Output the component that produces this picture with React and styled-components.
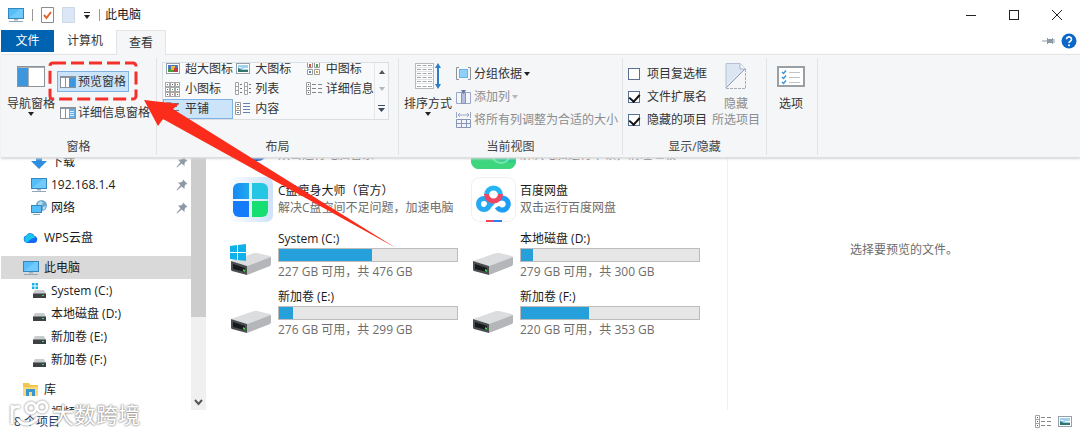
import React, { useState } from "react";
import styled, { createGlobalStyle } from "styled-components";

const GlobalStyle = createGlobalStyle`
  * {
    box-sizing: border-box;
  }
  body {
    margin: 0;
    background: #fff;
    font-family: "Open Sans", "Noto Sans CJK SC", sans-serif;
    font-size: 12px;
    line-height: 16px;
    color: #1a1a1a;
  }
  button, input {
    font: inherit;
    color: inherit;
  }
  button {
    border: 0;
    padding: 0;
    background: none;
    white-space: nowrap;
  }
  svg {
    display: block;
    flex: none;
  }
`;

const Window = styled.div`
  position: relative;
  display: flex;
  flex-direction: column;
  height: 100vh;
  overflow: hidden;
`;

const TitleBar = styled.header`
  display: flex;
  align-items: center;
  height: 30px;
  padding: 0 2px 0 8px;
`;

const QuickAccess = styled.div`
  display: flex;
  align-items: center;
  gap: 8px;
`;

const Divider = styled.span`
  width: 1px;
  height: 12px;
  background: #9a9a9a;
`;

const Title = styled.h1`
  flex: 1;
  margin: 0;
  padding-left: 5px;
  font-size: 12px;
  font-weight: 400;
`;

const WindowButton = styled.button`
  display: grid;
  place-items: center;
  width: 43px;
  height: 28px;
`;

const TabBar = styled.nav`
  position: relative;
  z-index: 2;
  display: flex;
  align-items: flex-start;
  height: 24px;
  padding-left: 1px;
`;

const Tab = styled.button`
  width: ${(props) => props.$width};
  height: ${(props) => (props.$active ? "25px" : "22px")};
  color: ${(props) => (props.$file ? "#fff" : "#333")};
  background: ${(props) => (props.$file ? "#0063b1" : props.$active ? "#f5f6f7" : "none")};
  border: ${(props) => (props.$active ? "1px solid #e2e4e6" : "0")};
  border-bottom: 0;
`;

const TabTools = styled.div`
  display: flex;
  align-items: center;
  gap: 6px;
  height: 22px;
  margin-left: auto;
  padding-right: 3px;
`;

const Ribbon = styled.section`
  position: absolute;
  z-index: 1;
  top: 54px;
  left: 1px;
  right: 0;
  display: flex;
  height: 104px;
  padding: 3px 0 2px;
  background: #f5f6f7;
  border-top: 1px solid #e2e4e6;
  border-bottom: 1px solid #dcdee0;
  box-shadow: 0 1px 2px #d5d7d9;
`;

const Group = styled.div`
  display: flex;
  flex-direction: column;
  justify-content: space-between;
  flex: none;
  width: ${(props) => props.$width};
  border-right: 1px solid #e2e3e4;
`;

const GroupBody = styled.div`
  display: flex;
  align-items: flex-start;
  gap: ${(props) => props.$gap || "0"};
  padding: ${(props) => props.$pad || "4px 5px 0"};
  color: #333;
`;

const GroupLabel = styled.div`
  text-align: center;
  color: #444;
`;

const BigButton = styled.button`
  display: flex;
  flex-direction: column;
  align-items: center;
  width: 48px;
  color: ${(props) => (props.disabled ? "#8a8d90" : "#333")};

  > svg:first-child {
    height: 28px;
    margin-bottom: 6px;
  }
`;

const Stack = styled.div`
  display: flex;
  flex-direction: column;
  align-items: flex-start;
  gap: ${(props) => props.$gap || "0"};
  padding-top: ${(props) => props.$top || "0"};
  margin-left: ${(props) => props.$left || "0"};
`;

const SmallButton = styled.button`
  display: flex;
  align-items: center;
  gap: 2px;
  height: ${(props) => props.$height || "23px"};
  padding: 0 2px;
  color: ${(props) => (props.disabled ? "#8a8d90" : "#333")};
  background: ${(props) => (props.$pressed ? "#cce4f9" : "none")};
  border: 1px solid ${(props) => (props.$pressed ? "#7fb2e3" : "transparent")};
`;

const Marked = styled.div`
  position: relative;
`;

const DashFrame = styled.svg`
  position: absolute;
  top: -10px;
  left: -10px;
  width: 92px;
  height: 40px;
  pointer-events: none;
`;

const Gallery = styled.div`
  display: flex;
  flex: 1;
  height: 58px;
  margin-right: 4px;
  border: 1px solid #dcdfe2;
  background: #f8f9fa;
`;

const GalleryGrid = styled.div`
  display: grid;
  flex: 1;
  grid-template-columns: repeat(3, minmax(0, 1fr));
  grid-auto-rows: 20px;
  align-content: end;
  overflow: hidden;
`;

const GalleryItem = styled.button`
  display: flex;
  align-items: center;
  gap: 4px;
  padding: 0 1px;
  line-height: 14px;
  background: ${(props) => (props.$selected ? "#cce4f9" : "none")};
  border: 1px solid ${(props) => (props.$selected ? "#7fb2e3" : "transparent")};
`;

const GalleryScroll = styled.div`
  display: grid;
  width: 14px;
  border-left: 1px solid #e4e6e8;

  button {
    display: grid;
    place-items: center;
  }
`;

const CheckRow = styled.label`
  display: flex;
  align-items: center;
  gap: 7px;
  height: 23px;
  white-space: nowrap;
`;

const Check = styled.input.attrs({ type: "checkbox" })`
  appearance: none;
  display: grid;
  place-items: center;
  width: 12px;
  height: 12px;
  margin: 0;
  background: #fff;
  border: 1px solid #5b6f94;

  &:checked::after {
    content: "";
    width: 5px;
    height: 8px;
    margin-bottom: 3px;
    border: solid #111;
    border-width: 0 2px 2px 0;
    transform: rotate(42deg);
  }
`;

const Body = styled.div`
  display: flex;
  flex: 1;
  min-height: 0;
`;

const Sidebar = styled.aside`
  display: flex;
  flex: none;
  width: 206px;
`;

const Tree = styled.ul`
  flex: 1;
  height: 100%;
  margin: 0;
  padding: 96px 0 0 1px;
  overflow: hidden;
  list-style: none;
`;

const TreeRow = styled.li`
  display: flex;
  align-items: center;
  gap: ${(props) => (props.$root ? "5px" : "4px")};
  height: 23px;
  margin-top: ${(props) => (props.$root ? "7px" : "0")};
  padding: 0 3px 0 ${(props) => (props.$root ? "22px" : "30px")};
  background: ${(props) => (props.$selected ? "#d9d9d9" : "none")};
  white-space: nowrap;

  > span {
    flex: 1;
  }
`;

const Scrollbar = styled.div`
  display: flex;
  flex-direction: column;
  width: 15px;
  background: #f0f0f0;
`;

const Thumb = styled.div`
  flex: 1;
  background: #cdcdcd;
`;

const ScrollEnd = styled.button`
  display: grid;
  place-items: end center;
  height: 93px;
  padding-bottom: 4px;
`;

const Files = styled.main`
  flex: 1;
  padding: 66px 0 0 23px;
  overflow: hidden;
`;

const Tiles = styled.div`
  display: grid;
  grid-template-columns: repeat(auto-fill, 242px);
  grid-template-rows: 52px 54px;
  grid-auto-rows: 58px;
`;

const Tile = styled.article`
  display: flex;
  align-items: center;
  gap: 4px;
`;

const TileText = styled.div`
  width: 180px;
  white-space: nowrap;
`;

const TileName = styled.div`
  min-height: 17px;
  line-height: 17px;
`;

const TileInfo = styled.div`
  line-height: 18px;
  color: #6d6d6d;
`;

const Meter = styled.div`
  height: 14px;
  margin: 1px 0;
  background: #e6e6e6;
  border: 1px solid #bcbcbc;
`;

const MeterFill = styled.div`
  height: 100%;
  background: #26a0da;
`;

const Preview = styled.aside`
  flex: none;
  width: 353px;
  padding-top: 188px;
  border-left: 1px solid #f0f0f0;
  text-align: center;
  color: #6d6d6d;
`;

const StatusBar = styled.footer`
  display: flex;
  align-items: center;
  gap: 6px;
  height: 23px;
  padding: 0 7px 0 14px;
  color: #1e3a63;

  > span {
    flex: 1;
  }
`;

const ArrowOverlay = styled.svg`
  position: absolute;
  z-index: 3;
  top: 90px;
  left: 140px;
  pointer-events: none;
`;

const Watermark = styled.div`
  position: absolute;
  z-index: 3;
  left: 8px;
  bottom: 4px;
  display: flex;
  align-items: center;
  gap: 2px;
  color: #fff;
  font-size: 22px;
  line-height: 28px;
  text-shadow: 0 0 2px #777, 0 0 2px #999;

  svg {
    filter: drop-shadow(0 0 1px #777);
  }
`;

const Caret = ({ color = "#222" }) => (
  <svg width="6" height="4"><path d="M0 0h6L3 4z" fill={color} /></svg>
);

const Monitor = () => (
  <svg width="16" height="16">
    <rect x="0.5" y="1.5" width="15" height="10" fill="#55bdf8" stroke="#3586bd" />
    <path d="M1 11L12 2h3v9z" fill="#82d2ff" opacity="0.6" />
    <path d="M6 12h4v1.5H6z" fill="#9fb3c2" />
    <path d="M1 14.5h14" stroke="#8fa7b8" />
  </svg>
);

const PaneIcon = ({ detail }) => (
  <svg width="16" height="12">
    <rect x="0.5" y="0.5" width="15" height="11" fill="#fff" stroke="#8c9299" />
    <path d="M5.5 1v10M1 1.5h14" stroke="#8c9299" fill="none" />
    <path d="M9 2h6v9H9z" fill={detail ? "#67aee6" : "#3e97dc"} />
    {detail && <path d="M10 4.5h4M10 6.5h4M10 8.5h4" stroke="#dceefb" />}
  </svg>
);

const PictureIcon = ({ big }) => (
  <svg width="16" height="14">
    <rect x="1.5" y="1.5" width="13" height="10" fill="#fff" stroke="#96a0aa" />
    <path d="M3 3h10v7H3z" fill={big ? "#4a78c2" : "#9fd0ee"} />
    {big ? (
      <>
        <path d="M3 7h4l2 3H3z" fill="#4b9b3c" />
        <rect x="6" y="4" width="4" height="4" fill="#f2b63a" />
        <path d="M9 6h4v4H9z" fill="#b73d46" />
      </>
    ) : (
      <>
        <path d="M3 5h3l3 2h4v-1z" fill="#fff" />
        <path d="M3 6l4 2h6v2H3z" fill="#30766c" />
      </>
    )}
  </svg>
);

const dots = ["#d05045", "#4b7fc0", "#555", "#559b52"];

const MediumIcon = () => (
  <svg width="16" height="14">
    <path d="M1.5 0.5h5v5h-5zM8.5 0.5h5v5h-5zM1.5 7.5h5v5h-5zM8.5 7.5h5v5h-5z" fill="#fff" stroke="#9a9a9a" />
    <path d="M3 2h2v3H3z" fill="#d05045" />
    <path d="M10 2h2v3h-2z" fill="#559b52" />
    <path d="M3 9h2v2H3z" fill="#4b7fc0" />
    <path d="M10 9h2v2h-2z" fill="#e0a030" />
  </svg>
);

const SmallIcon = () => (
  <svg width="16" height="15">
    {[0, 1, 2].map((r) =>
      [0, 1, 2].map((c) => (
        <g key={r + "-" + c}>
          <rect x={0.5 + c * 5} y={0.5 + r * 5} width="4" height="4" fill="#fff" stroke="#a8a8a8" />
          <rect x={2 + c * 5} y={2 + r * 5} width="1" height="1" fill={dots[(r + c * 2) % 4]} />
        </g>
      ))
    )}
  </svg>
);

const ListIcon = () => (
  <svg width="16" height="14">
    {[0, 9].map((x) => (
      <g key={x}>
        <path d={`M${x + 0.5} 0.5h3v12h-3zM${x + 0.5} 4.5h3M${x + 0.5} 8.5h3`} fill="#fff" stroke="#a3a3a3" />
        <path d={`M${x + 5} 2.5h2M${x + 5} 6.5h2M${x + 5} 10.5h2`} stroke="#777" />
      </g>
    ))}
  </svg>
);

const DetailsIcon = () => (
  <svg width="16" height="14">
    <path d="M0.5 0.5h4v12h-4zM0.5 4.5h4M0.5 8.5h4" fill="#fff" stroke="#a3a3a3" />
    <path d="M2 2.5h1M2 6.5h1M2 10.5h1" stroke="#555" />
    <path d="M6 2.5h4M12 2.5h4M6 6.5h4M12 6.5h4M6 10.5h4M12 10.5h4" stroke="#868686" />
  </svg>
);

const TilesIcon = () => (
  <svg width="16" height="14">
    <path d="M1.5 0.5h5v5h-5zM1.5 7.5h5v5h-5z" fill="#fff" stroke="#8e9aa5" />
    <path d="M3 3h2M3 10h2" stroke="#4b7fc0" strokeWidth="2" />
    <path d="M8 1.5h6M8 4.5h4M8 8.5h6M8 11.5h4" stroke="#6a7680" />
  </svg>
);

const ContentIcon = () => (
  <svg width="16" height="14">
    <path d="M0.5 0.5h5v12h-5zM0.5 4.5h5M0.5 8.5h5" fill="#fff" stroke="#9a9a9a" />
    <path d="M2 2.5h2M2 10.5h2" stroke="#4b7fc0" />
    <path d="M2 6.5h2" stroke="#b07a30" />
    <path d="M8 1.5h7M8 4.5h7M8 7.5h7M8 10.5h7" stroke="#5f83b0" />
  </svg>
);

const NavPaneIcon = () => (
  <svg width="28" height="28" viewBox="0 -4 28 28">
    <rect x="0.5" y="0.5" width="27" height="20" fill="#fff" stroke="#8c9299" />
    <path d="M1 2h10v18H1z" fill="#3e97dc" />
    <path d="M11.5 1v19M1 1.5h26" stroke="#a9b0b6" />
  </svg>
);

const SortIcon = () => (
  <svg width="28" height="28">
    <rect x="1.5" y="1.5" width="18" height="25" fill="#fff" stroke="#b7bbbf" />
    <path d="M2 5.5h17M2 9.5h17M2 13.5h17M2 17.5h17M2 21.5h17" stroke="#dfe3e6" />
    <path d="M3 3.5h15M3 7.5h15M3 11.5h15M3 15.5h15M3 19.5h15M3 24.5h15" stroke="#a3a9ae" strokeDasharray="4 1.5" />
    <path d="M24 3v22" stroke="#2d7ec4" strokeWidth="2" />
    <path d="M21 6l3-5 3 5zM21 22l3 5 3-5z" fill="#2d7ec4" />
  </svg>
);

const GroupByIcon = () => (
  <svg width="16" height="14">
    <path d="M3 0.5H0.5v12H3M12 0.5h2.5v12H12" fill="none" stroke="#8c9299" />
    <rect x="3.5" y="2.5" width="8" height="8" fill="#8fd0fa" stroke="#64b5ee" />
  </svg>
);

const AddColumnIcon = () => (
  <svg width="16" height="14">
    <path d="M0.5 2.5h14v11h-14z" fill="#f4f6fb" stroke="#9aa6c4" />
    <path d="M5.5 2.5h4v11h-4z" fill="#b4c0dc" stroke="#8795b8" />
    <path d="M5 0h5L7.5 4z" fill="#6578a8" />
  </svg>
);

const FitColumnsIcon = () => (
  <svg width="16" height="16">
    <path d="M0.5 0v6M14.5 0v6M2 3h11M4 1L2 3l2 2M11 1l2 2-2 2" fill="none" stroke="#9aa6c4" />
    <path d="M0.5 7.5h14v8h-14zM0.5 11.5h14M5.5 8v7M10.5 8v7" fill="#f1f3f9" stroke="#8795b8" />
  </svg>
);

const HideIcon = () => (
  <svg width="22" height="28">
    <path d="M1 1h14L20 7 1 26z" fill="#dce6f3" />
    <path d="M1 26V1.5h14l5.5 5.5" fill="none" stroke="#b5c1d2" />
    <path d="M15 1.5V7h5.5" fill="#f5f8fc" stroke="#a6b5cb" />
    <path d="M1 26L20 7" stroke="#8f9db3" />
    <path d="M20.5 7v19.5H1" fill="none" stroke="#a6aeba" strokeDasharray="3 1" />
  </svg>
);

const OptionsIcon = () => (
  <svg width="28" height="28" viewBox="0 -4 28 28">
    <rect x="1" y="1" width="26" height="19" fill="#fff" stroke="#9a9fa4" strokeWidth="2" />
    <path d="M5 6l1.5 1.5L9 4.5M5 11l1.5 1.5L9 9.5M5 16l1.5 1.5L9 14.5" fill="none" stroke="#3e97dc" strokeWidth="1.5" />
    <path d="M12 6.5h11M12 11.5h11M12 16.5h11" stroke="#c0c4c8" />
  </svg>
);

const Pin = () => (
  <svg width="12" height="12">
    <path d="M7 0.5L11.5 5 9.5 5.5 8.5 7.5 8.5 10 5.7 7.5 1 11.5 0.5 11 4.5 6.3 2 3.5 4.5 3.5 6.5 2.5z" fill="#8d98a5" />
  </svg>
);

const DownloadIcon = () => (
  <svg width="16" height="16"><path d="M5 1h6v6h5l-8 8-8-8h5z" fill="#2f8de0" /></svg>
);

const NetworkIcon = () => (
  <svg width="16" height="16">
    <circle cx="10.5" cy="5.5" r="5.5" fill="#6fa9cf" />
    <path d="M7 3l3-2 2 2-2 3-3-1zM12 7l3-1-1 3-2 1z" fill="#b9dced" />
    <rect x="0.5" y="5.5" width="10" height="7" fill="#55bdf8" stroke="#3586bd" />
    <path d="M2 14.5h7" stroke="#8fa7b8" />
  </svg>
);

const CloudIcon = () => (
  <svg width="16" height="14">
    <path d="M4.5 12a4 4 0 0 1-1-7.8A4.5 4.5 0 0 1 11.5 5a3.6 3.6 0 0 1 0 7z" fill="#1769f5" />
    <path d="M3 5a5 5 0 0 1 9 2c-3 0-6 2-8 5A4 4 0 0 1 3 5z" fill="#19c4ea" />
  </svg>
);

const SmallDrive = ({ system }) => (
  <svg width="16" height="16">
    {system && <path d="M1 0h2.5v2.5H1zM4.5 0H7v2.5H4.5zM1 3.5h2.5V6H1zM4.5 3.5H7V6H4.5z" fill="#12b0e8" />}
    <path d="M4 7h9l2 4H2z" fill="#c9cccf" />
    <path d="M2 10.5h13V15H2z" fill="#3d4144" />
    <path d="M11 12.5h2" stroke="#43d36b" />
  </svg>
);

const LibraryIcon = () => (
  <svg width="16" height="15">
    <path d="M0 1h6l1 2h8v11H0z" fill="#f3c44c" />
    <path d="M0 5h15v9H0z" fill="#fbd978" />
    <path d="M3 14V7h9v7h-3v-4H6v4z" fill="#3b96cf" />
  </svg>
);

const Drive = ({ system }) => (
  <svg width="45" height="45">
    <path d="M2 28l23-8q2 0 3 0l13 3q1 1 0 2l-23 8z" fill="#dcdddf" />
    <path d="M18 33l24-9v7q0 1-1 2l-23 9z" fill="#b4b6b9" />
    <path d="M2 28l16 5v9L3 38q-1 0-1-2z" fill="#4b4e50" />
    <path d="M4 31l12 4v4L4 36z" fill="#17191a" />
    <path d="M14 36l2 1v2l-2-1z" fill="#3fd94b" />
    {system && (
      <path d="M1 13l7-1v7H1zM9 12l8-1v8H9zM1 20h7v7l-7-1zM9 20h8v8l-8-1z" fill="#12b0e8" />
    )}
  </svg>
);

const CleanerIcon = () => (
  <svg width="45" height="45">
    <defs>
      <linearGradient id="tileBg" x1="0" y1="0" x2="1" y2="0">
        <stop offset="0" stopColor="#fbfdfe" />
        <stop offset="1" stopColor="#cfe2fa" />
      </linearGradient>
      <linearGradient id="tileA" x1="0" y1="0" x2="1" y2="0">
        <stop offset="0" stopColor="#168af5" />
        <stop offset="1" stopColor="#20a9ee" />
      </linearGradient>
    </defs>
    <rect width="44" height="45" rx="7" fill="url(#tileBg)" />
    <path d="M10 6h10v16H4V12a6 6 0 0 1 6-6z" fill="url(#tileA)" />
    <path d="M23 6h10a6 6 0 0 1 6 6v10H23z" fill="#25c6e4" />
    <path d="M4 24h16v16H10a6 6 0 0 1-6-6z" fill="#147bfa" />
    <path d="M23 24h16v10a6 6 0 0 1-6 6H23z" fill="#14df70" />
  </svg>
);

const NetdiskIcon = () => (
  <svg width="45" height="45">
    <rect x="0.5" y="0.5" width="44" height="44" rx="8" fill="#fff" stroke="#f0eeee" />
    <g fill="none" strokeWidth="5">
      <circle cx="13" cy="27" r="5.5" stroke="#25a9f2" />
      <path d="M26 30a6 6 0 1 0 2-8" stroke="#1d9df4" />
      <path d="M16 31l6-6" stroke="#25a9f2" />
      <path d="M15.5 18a7 7 0 1 1 14 0" stroke="#25b5f5" />
      <path d="M15.5 17a7 7 0 0 0 14 0" stroke="#ee4764" />
    </g>
    <path d="M15 43h8v2h-8z" fill="#ee4764" />
    <path d="M23 43h8v2h-8z" fill="#2d7ff0" />
  </svg>
);

const GreenIcon = () => (
  <svg width="45" height="46">
    <rect y="2" width="45" height="44" rx="8" fill="#27ca91" />
    <path d="M0 38a8 8 0 0 0 8 8h29a8 8 0 0 0 8-8c-12 5-28-8-45-7z" fill="#3ed67c" />
    <circle cx="30" cy="31" r="9" fill="none" stroke="#74e5b3" strokeWidth="2" />
  </svg>
);

const BlueIcon = () => (
  <svg width="45" height="45"><rect x="4" y="0" width="36" height="37" rx="12" fill="#1155c4" /></svg>
);

const layouts = [
  { name: "超大图标", icon: <PictureIcon big /> },
  { name: "大图标", icon: <PictureIcon /> },
  { name: "中图标", icon: <MediumIcon /> },
  { name: "小图标", icon: <SmallIcon /> },
  { name: "列表", icon: <ListIcon /> },
  { name: "详细信息", icon: <DetailsIcon /> },
  { name: "平铺", icon: <TilesIcon /> },
  { name: "内容", icon: <ContentIcon /> },
];

const tree = [
  { name: "下载", icon: <DownloadIcon />, pinned: true },
  { name: "192.168.1.4", icon: <Monitor />, pinned: true },
  { name: "网络", icon: <NetworkIcon />, pinned: true },
  { name: "WPS云盘", icon: <CloudIcon />, root: true },
  { name: "此电脑", icon: <Monitor />, root: true, selected: true },
  { name: "System (C:)", icon: <SmallDrive system /> },
  { name: "本地磁盘 (D:)", icon: <SmallDrive /> },
  { name: "新加卷 (E:)", icon: <SmallDrive /> },
  { name: "新加卷 (F:)", icon: <SmallDrive /> },
  { name: "库", icon: <LibraryIcon />, root: true },
  { name: "视频", icon: <SmallDrive /> },
];

// the first row is scrolled half under the ribbon
const tiles = [
  { info: "双击运行电脑管家", icon: <BlueIcon /> },
  { info: "解决电脑运行卡顿，清理垃圾", icon: <GreenIcon /> },
  { name: "C盘瘦身大师（官方）", info: "解决C盘空间不足问题，加速电脑", icon: <CleanerIcon /> },
  { name: "百度网盘", info: "双击运行百度网盘", icon: <NetdiskIcon /> },
  { name: "System (C:)", info: "227 GB 可用，共 476 GB", used: 52, icon: <Drive system /> },
  { name: "本地磁盘 (D:)", info: "279 GB 可用，共 300 GB", used: 7, icon: <Drive /> },
  { name: "新加卷 (E:)", info: "276 GB 可用，共 299 GB", used: 8, icon: <Drive /> },
  { name: "新加卷 (F:)", info: "220 GB 可用，共 353 GB", used: 38, icon: <Drive /> },
];

const CheckOption = ({ label, initial }) => {
  const [on, setOn] = useState(initial);
  return (
    <CheckRow>
      <Check checked={on} onChange={() => setOn(!on)} />
      {label}
    </CheckRow>
  );
};

const ViewRibbon = () => {
  const [layout, setLayout] = useState("平铺");
  return (
    <Ribbon>
      <Group $width="156px">
        <GroupBody $pad="4px 0 0 6px">
          <BigButton>
            <NavPaneIcon />
            导航窗格
            <Caret />
          </BigButton>
          <Stack $gap="10px" $top="9px" $left="2px">
            <Marked>
              <SmallButton $height="21px" $pressed>
                <PaneIcon />
                预览窗格
              </SmallButton>
              <DashFrame>
                <rect x="3" y="2" width="86" height="36" rx="3" fill="none" stroke="#f5302b" strokeWidth="3" strokeDasharray="13 5" />
              </DashFrame>
            </Marked>
            <SmallButton $height="21px">
              <PaneIcon detail />
              详细信息窗格
            </SmallButton>
          </Stack>
        </GroupBody>
        <GroupLabel>窗格</GroupLabel>
      </Group>

      <Group $width="242px">
        <GroupBody>
          <Gallery>
            <GalleryGrid>
              {layouts.map((item) => (
                <GalleryItem key={item.name} $selected={item.name === layout} onClick={() => setLayout(item.name)}>
                  {item.icon}
                  {item.name}
                </GalleryItem>
              ))}
            </GalleryGrid>
            <GalleryScroll>
              <button aria-label="向上"><svg width="6" height="4"><path d="M0 4h6L3 0z" fill="#555" /></svg></button>
              <button aria-label="向下"><Caret color="#b5b8bb" /></button>
              <button aria-label="更多"><svg width="8" height="7"><path d="M0 0.5h7" stroke="#3d4a63" /><path d="M0 3h7L3.5 7z" fill="#3d4a63" /></svg></button>
            </GalleryScroll>
          </Gallery>
        </GroupBody>
        <GroupLabel>布局</GroupLabel>
      </Group>

      <Group $width="224px">
        <GroupBody>
          <BigButton>
            <SortIcon />
            排序方式
            <Caret />
          </BigButton>
          <Stack $left="1px">
            <SmallButton>
              <GroupByIcon />
              分组依据
              <Caret />
            </SmallButton>
            <SmallButton disabled>
              <AddColumnIcon />
              添加列
              <Caret color="#b5b8bb" />
            </SmallButton>
            <SmallButton disabled>
              <FitColumnsIcon />
              将所有列调整为合适的大小
            </SmallButton>
          </Stack>
        </GroupBody>
        <GroupLabel>当前视图</GroupLabel>
      </Group>

      <Group $width="144px">
        <GroupBody $gap="5px">
          <Stack>
            <CheckOption label="项目复选框" initial={false} />
            <CheckOption label="文件扩展名" initial={true} />
            <CheckOption label="隐藏的项目" initial={true} />
          </Stack>
          <BigButton disabled>
            <HideIcon />
            隐藏
            <span>所选项目</span>
          </BigButton>
        </GroupBody>
        <GroupLabel>显示/隐藏</GroupLabel>
      </Group>

      <Group $width="51px">
        <GroupBody $pad="4px 0 0">
          <BigButton>
            <OptionsIcon />
            选项
          </BigButton>
        </GroupBody>
      </Group>
    </Ribbon>
  );
};

const App = () => {
  return (
    <Window>
      <GlobalStyle />
      <TitleBar>
        <QuickAccess>
          <Monitor />
          <Divider />
          <svg width="13" height="16">
            <path d="M0.5 0.5h12v15h-12z" fill="#fff" stroke="#8b8b8b" />
            <path d="M3 8l2.5 3L10 5" fill="none" stroke="#e0622c" strokeWidth="2" />
          </svg>
          <svg width="13" height="16">
            <path d="M0.5 0.5h12v15h-12z" fill="#dbe6f6" stroke="#cdd8e8" />
          </svg>
          <svg width="8" height="7"><path d="M1 0.5h6" stroke="#222" /><path d="M1 3h6L4 7z" fill="#222" /></svg>
          <Divider />
        </QuickAccess>
        <Title>此电脑</Title>
        <WindowButton aria-label="最小化"><svg width="10" height="10"><path d="M0 5.5h10" stroke="#222" /></svg></WindowButton>
        <WindowButton aria-label="最大化"><svg width="10" height="10"><rect x="0.5" y="0.5" width="9" height="9" fill="none" stroke="#222" /></svg></WindowButton>
        <WindowButton aria-label="关闭"><svg width="10" height="10"><path d="M0 0l10 10M10 0L0 10" stroke="#222" /></svg></WindowButton>
      </TitleBar>

      <TabBar>
        <Tab $file $width="53px">文件</Tab>
        <Tab $width="62px">计算机</Tab>
        <Tab $active $width="50px">查看</Tab>
        <TabTools>
          <svg width="13" height="8">
            <path d="M0 4h5M5.5 1v6M10.5 1v6M12 2v4" stroke="#8d98a5" />
            <path d="M5 2h6v4H5z" fill="#8d98a5" />
          </svg>
          <svg width="16" height="16" role="img" aria-label="帮助">
            <circle cx="8" cy="8" r="7.5" fill="#0b68c8" />
            <path d="M5.5 6.2a2.5 2.3 0 1 1 3.8 2C8.3 8.8 8 9 8 10" fill="none" stroke="#fff" strokeWidth="1.6" />
            <circle cx="8" cy="12.2" r="1" fill="#fff" />
          </svg>
        </TabTools>
      </TabBar>

      <ViewRibbon />

      <Body>
        <Sidebar>
          <Tree>
            {tree.map((item) => (
              <TreeRow key={item.name} $root={item.root} $selected={item.selected}>
                {item.icon}
                <span>{item.name}</span>
                {item.pinned && <Pin />}
              </TreeRow>
            ))}
          </Tree>
          <Scrollbar>
            <Thumb />
            <ScrollEnd aria-label="向下滚动">
              <svg width="9" height="7"><path d="M1 1l3.5 4L8 1" fill="none" stroke="#555" strokeWidth="2" /></svg>
            </ScrollEnd>
          </Scrollbar>
        </Sidebar>
        <Files>
          <Tiles>
            {tiles.map((tile) => (
              <Tile key={tile.info}>
                {tile.icon}
                <TileText>
                  <TileName>{tile.name}</TileName>
                  {tile.used && (
                    <Meter role="meter" aria-valuenow={tile.used} aria-label={tile.name}>
                      <MeterFill style={{ width: tile.used + "%" }} />
                    </Meter>
                  )}
                  <TileInfo>{tile.info}</TileInfo>
                </TileText>
              </Tile>
            ))}
          </Tiles>
        </Files>
        <Preview>选择要预览的文件。</Preview>
      </Body>

      <StatusBar>
        <span>8 个项目</span>
        <DetailsIcon />
        <PictureIcon />
      </StatusBar>

      <ArrowOverlay width="260" height="162">
        <path d="M4 10L39 14 33 19 256 158 23 29 18 36z" fill="#fb2c1c" />
      </ArrowOverlay>

      <Watermark>
        <svg width="42" height="30" viewBox="0 0 42 30" fill="none" stroke="#fff" strokeWidth="3">
          <path d="M4 6v19M4 12c1-4 4-5 8-4" />
          <circle cx="23" cy="9" r="5" />
          <circle cx="34" cy="8" r="5" />
          <path d="M10 20c3 7 14 7 20-2" />
        </svg>
        大数跨境
      </Watermark>
    </Window>
  );
};

export default App;
